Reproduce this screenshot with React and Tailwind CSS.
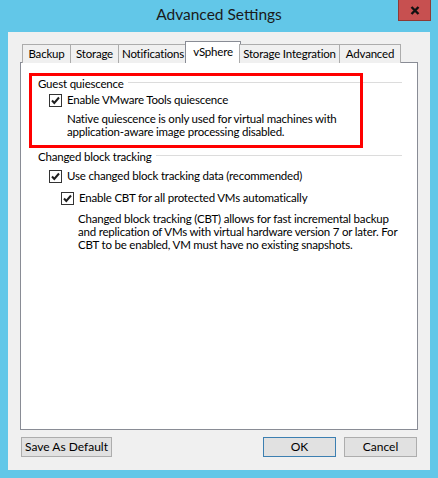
import React from 'react';

const font = { fontFamily: 'Lato, "Liberation Sans", sans-serif' };

function CheckBox() {
  return (
    <span className="w-[13px] h-[13px] border border-[#333333] bg-white flex items-center justify-center shrink-0">
      <svg width="11" height="11" viewBox="0 0 11 11">
        <path d="M2 5.5 L4.3 8 L9 2.5" fill="none" stroke="#1e1e1e" strokeWidth="2" />
      </svg>
    </span>
  );
}

function GroupHeader({ title }) {
  return (
    <div className="h-[16px] flex items-center pl-[17px] pr-[15px]">
      <span>{title}</span>
      <span className="flex-1 h-px bg-[#dcdcdc] ml-[4px] -mt-[3px]" />
    </div>
  );
}

function CheckRow({ label, indent }) {
  return (
    <div className={`h-[16px] flex items-center ${indent}`}>
      <CheckBox />
      <span className="ml-[5px]">{label}</span>
    </div>
  );
}

const tabs = [
  { name: 'Backup', w: 'w-[48px]' },
  { name: 'Storage', w: 'w-[48px]' },
  { name: 'Notifications', w: 'w-[69px]' },
  { name: 'vSphere', w: 'w-[56px]', active: true },
  { name: 'Storage Integration', w: 'w-[100px]' },
  { name: 'Advanced', w: 'w-[62px]' },
];

function Tabs() {
  return (
    <div className="flex items-end h-[22px] pl-[2px] relative z-10">
      {tabs.map((t) =>
        t.active ? (
          <div
            key={t.name}
            className={`${t.w} -mx-[2px] h-[22px] bg-white border border-b-0 border-[#898c95] flex items-center justify-center pb-[2px] shrink-0`}
          >
            {t.name}
          </div>
        ) : (
          <div
            key={t.name}
            className={`${t.w} h-[19px] bg-[#f0f0f0] border border-r-0 last:border-r border-b-0 border-[#acacac] flex items-center justify-center shrink-0`}
          >
            {t.name}
          </div>
        )
      )}
    </div>
  );
}

function Btn({ children, w, primary }) {
  return (
    <button
      className={`${w} h-[20px] bg-[#e1e1e1] border ${primary ? 'border-[#3c7fb1]' : 'border-[#adadad]'} flex items-center justify-center text-black`}
    >
      {children}
    </button>
  );
}

export default function App() {
  return (
    <div
      className="w-[438px] h-[478px] bg-[#62c7e8] px-[8px] pb-[8px] flex flex-col text-[11.5px] tracking-[-0.2px] text-black whitespace-nowrap"
      style={font}
    >
      {/* title bar */}
      <div className="h-[32px] relative flex items-center justify-center text-[15.5px] tracking-normal text-[#1a1a1a]">
        <span className="-mt-[3px]">Advanced Settings</span>
        <div className="absolute -right-[1px] top-0 w-[33px] h-[21px] bg-[#c75050] border border-[#8d3a35] border-t-0 flex items-center justify-center">
          <svg width="10" height="9" viewBox="0 0 10 9">
            <path d="M1.5 1 L8.5 8 M8.5 1 L1.5 8" stroke="#111" strokeWidth="2.4" />
          </svg>
        </div>
      </div>

      {/* client area */}
      <div className="flex-1 bg-[#f0f0f0] pt-[9px] px-[12px] flex flex-col">
        <Tabs />
        <div className="h-[368px] -mt-px bg-white border border-[#898c95] relative">
          <div className="pt-[13px]">
            <GroupHeader title="Guest quiescence" />
            <CheckRow label="Enable VMware Tools quiescence" indent="pl-[28px]" />
            <div className="pl-[46px] mt-[4px] leading-[13px]">
              <div>Native quiescence is only used for virtual machines with</div>
              <div>application-aware image processing disabled.</div>
            </div>

            <div className="mt-[11px]">
              <GroupHeader title="Changed block tracking" />
            </div>
            <div className="mt-[3px]">
              <CheckRow label="Use changed block tracking data (recommended)" indent="pl-[28px]" />
            </div>
            <div className="mt-[6px]">
              <CheckRow label="Enable CBT for all protected VMs automatically" indent="pl-[40px]" />
            </div>
            <div className="pl-[57px] mt-[6px] leading-[13px]">
              <div>Changed block tracking (CBT) allows for fast incremental backup</div>
              <div>and replication of VMs with virtual hardware version 7 or later. For</div>
              <div>CBT to be enabled, VM must have no existing snapshots.</div>
            </div>
          </div>

          {/* red highlight annotation */}
          <div className="absolute left-[8px] top-[10px] w-[334px] h-[75px] border-[3px] border-[#ff0000] pointer-events-none" />
        </div>

        <div className="flex items-center mt-[7px] pl-[1px] text-[12px] tracking-normal">
          <Btn w="w-[91px]">Save As Default</Btn>
          <div className="flex-1" />
          <Btn w="w-[73px]" primary>OK</Btn>
          <div className="w-[8px]" />
          <Btn w="w-[73px]">Cancel</Btn>
          <div className="w-[1px]" />
        </div>
      </div>
    </div>
  );
}
